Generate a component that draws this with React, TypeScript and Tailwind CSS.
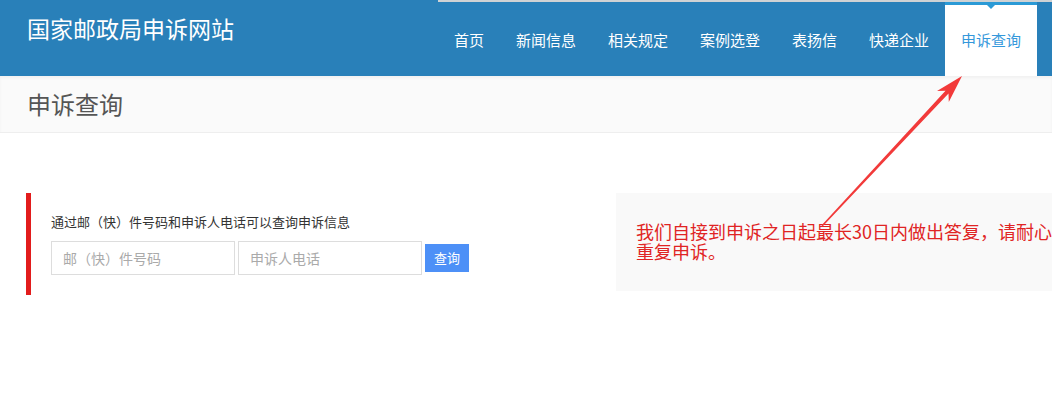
import React from 'react'

const navItems = ['首页', '新闻信息', '相关规定', '案例选登', '表扬信', '快递企业', '申诉查询']

function Arrow() {
  // red annotation arrow pointing at the active tab
  return (
    <svg className="absolute left-0 top-0 pointer-events-none" width="1052" height="399" viewBox="0 0 1052 399">
      <polygon
        points="822.6,226.5 948.5,93.5 948.8,102 962,76 937,91 945.5,90.7 821.4,225.5"
        fill="#f23a3a"
      />
    </svg>
  )
}

export default function App() {
  return (
    <div
      className="relative w-[1052px] h-[399px] overflow-hidden bg-white"
      style={{ fontFamily: '"Noto Sans CJK SC", "Noto Sans", sans-serif' }}
    >
      {/* Header */}
      <header className="h-[76px] bg-[#2980b9] flex justify-between pl-[27px] pr-[15px]">
        <div className="pt-[14px] text-[23px] leading-[28px] text-white">国家邮政局申诉网站</div>
        <nav className="flex border-t-2 border-[#cfd2d4] -mr-[15px] pr-[15px]">
          {navItems.map((item, i) => {
            const active = i === navItems.length - 1
            return (
              <div
                key={item}
                className={`relative flex items-center px-4 text-[15px] ${
                  active ? 'bg-white text-[#3498db] border-t-[3px] border-[#2b9ad6]' : 'text-white pt-[3px]'
                }`}
              >
                {active && (
                  <span className="absolute left-1/2 -translate-x-1/2 top-0 w-0 h-0 border-l-[4px] border-r-[4px] border-t-[4px] border-l-transparent border-r-transparent border-t-[#2b9ad6]" />
                )}
                {item}
              </div>
            )
          })}
        </nav>
      </header>

      {/* Page title bar */}
      <div className="h-[57px] bg-[#fafafa] border-b border-[#eeeeee] flex items-center pl-[27px] shadow-[inset_0_2px_3px_rgba(0,0,0,0.04)]">
        <h1 className="text-[24px] leading-none text-[#555555]">申诉查询</h1>
      </div>

      {/* Main */}
      <div className="flex items-start pl-[26px] pt-[60px]">
        <div className="w-[590px] shrink-0">
          <div className="border-l-[5px] border-[#e21c1c] pl-[20px] pt-[19px] pb-[20px] w-fit">
            <p className="text-[13px] leading-[20px] text-[#333333]">通过邮（快）件号码和申诉人电话可以查询申诉信息</p>
            <div className="flex items-center gap-[3px] mt-[9px]">
              <input
                className="w-[184px] h-[34px] border border-[#dddddd] px-[11px] text-[14px] outline-none placeholder:text-[#aaaaaa]"
                placeholder="邮（快）件号码"
              />
              <input
                className="w-[184px] h-[34px] border border-[#dddddd] px-[11px] text-[14px] outline-none placeholder:text-[#aaaaaa]"
                placeholder="申诉人电话"
              />
              <button className="w-[44px] h-[28px] bg-[#4d90f7] text-white text-[13px]">查询</button>
            </div>
          </div>
        </div>
        <div className="w-[560px] shrink-0 h-[98px] bg-[#f9f9f9] pl-[20px] pr-[20px] pt-[28px]">
          <p className="text-[18px] leading-[20px] text-[#e02424]">
            我们自接到申诉之日起最长30日内做出答复，请耐心等待，请勿重复申诉。
          </p>
        </div>
      </div>

      <Arrow />
    </div>
  )
}
